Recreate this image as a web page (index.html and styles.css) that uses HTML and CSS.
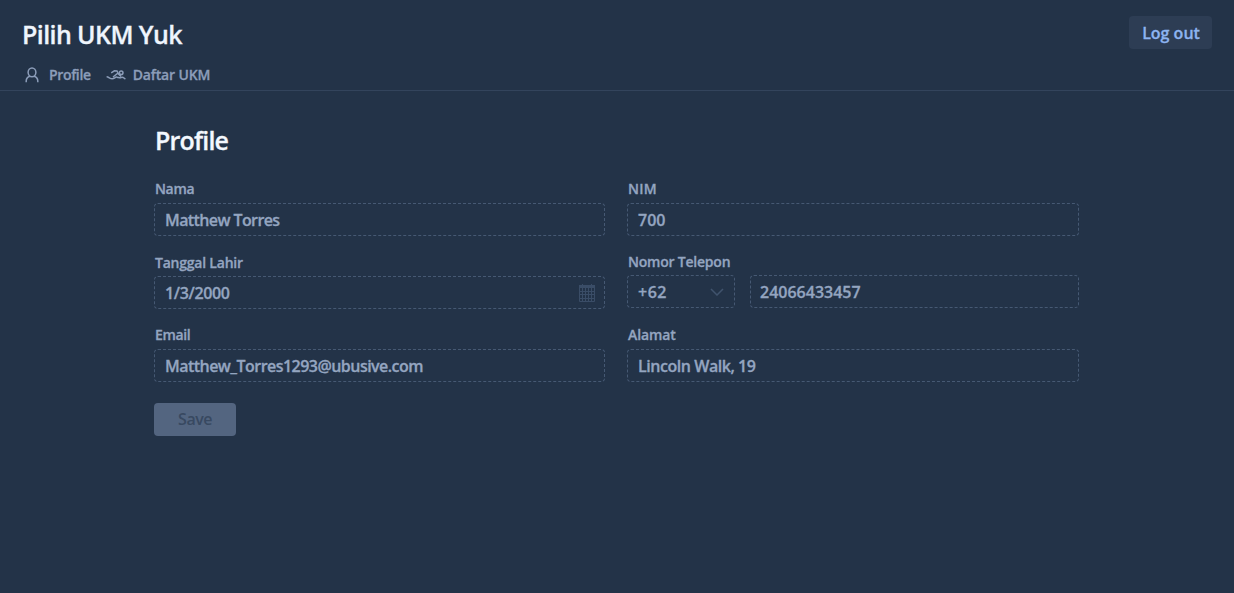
FILE: index.html
```html
<!DOCTYPE html>
<html lang="id">
<head>
<meta charset="utf-8">
<title>Pilih UKM Yuk</title>
<link rel="stylesheet" href="styles.css">
</head>
<body>
<header class="header">
  <div class="topbar">
    <h1 class="brand"><span class="t-brand">Pilih UKM Yuk</span></h1>
    <button class="logout"><span class="t-logout">Log out</span></button>
  </div>
  <nav class="nav">
    <a class="nav-item nav-profile">
      <svg class="icon-user" viewBox="0 0 14 16"><ellipse cx="7" cy="5.3" rx="3.9" ry="4.4"/><path d="M1.2 15.2V14C1.2 11.6 2.8 9.8 5 9.2M12.8 15.2V14C12.8 11.6 11.2 9.8 9 9.2"/></svg>
      <span class="t-profile">Profile</span>
    </a>
    <a class="nav-item">
      <svg class="icon-swim" viewBox="0 0 20 12"><circle cx="15.2" cy="3.8" r="1.8"/><path d="M5.2 3.8 8.4 1.8 11 2 12 4 7 8M12 4.4 15 7.4M.6 7.8C3 7.8 3.6 9.8 6.2 9.8S9 7.6 11.2 8.2 14 9.4 15.4 8.4 17.8 9 19.4 10.2"/></svg>
      <span class="t-daftar">Daftar UKM</span>
    </a>
  </nav>
</header>
<main class="main">
  <h2 class="title"><span class="t-title">Profile</span></h2>
  <form class="form">
    <div class="column">
      <div class="field"><label class="label"><span class="t-nama">Nama</span></label><div class="input"><span class="t-matthew">Matthew Torres</span></div></div>
      <div class="field field-date"><label class="label"><span class="t-tanggal">Tanggal Lahir</span></label><div class="input"><span class="t-date">1/3/2000</span>
        <svg class="icon-calendar" viewBox="0 0 16 18"><path class="cal-head" d="M0 1H3V0H4V1H12V0H13V1H16V4H0Z"/><path d="M.5 4V17.5H15.5V4M.5 7.5H15.5M.5 10.5H15.5M.5 14.5H15.5M3.5 4V17.5M6.5 4V17.5M9.5 4V17.5M12.5 4V17.5"/></svg></div></div>
      <div class="field"><label class="label"><span class="t-email">Email</span></label><div class="input"><span class="t-mail">Matthew_Torres1293@ubusive.com</span></div></div>
    </div>
    <div class="column">
      <div class="field"><label class="label"><span class="t-nim">NIM</span></label><div class="input"><span class="t-700">700</span></div></div>
      <div class="field field-phone"><label class="label"><span class="t-nomor">Nomor Telepon</span></label>
        <div class="phone"><div class="input code"><span class="t-code">+62</span><svg class="icon-chevron" viewBox="0 0 14 8"><path d="M1 1 7 7 13 1"/></svg></div><div class="input number"><span class="t-number">24066433457</span></div></div></div>
      <div class="field"><label class="label"><span class="t-alamat">Alamat</span></label><div class="input"><span class="t-lincoln">Lincoln Walk, 19</span></div></div>
    </div>
  </form>
  <button class="save"><span class="t-save">Save</span></button>
</main>
</body>
</html>
```
FILE: styles.css
```css
* { box-sizing: border-box; }
body {
  margin: 0;
  min-height: 593px;
  background: #233348;
  color: #94a5c0;
  font-family: "Open Sans", "Noto Sans", sans-serif;
  font-weight: 600;
  -webkit-text-stroke: .3px currentColor;
}
h1, h2 { margin: 0; font-weight: 600; }
button { border: 0; font: inherit; border-radius: 4px; padding: 0; }
span { white-space: nowrap; }
svg { fill: none; stroke: currentColor; flex: none; }

.header { height: 91px; padding: 16px 22px 0; border-bottom: 1px solid #33445c; }
.topbar { display: flex; justify-content: space-between; height: 48px; }
.brand { font-size: 25px; line-height: 36px; color: #eff5fd; }
.logout { width: 83px; height: 33px; background: #2d3d54; color: #8db4f0; font-size: 16px; line-height: 35px; padding-left: 1px; }
.nav { display: flex; gap: 15px; font-size: 14px; line-height: 22px; color: #8c9db9; padding-left: 3px; }
.nav-item { display: flex; align-items: center; }
.icon-user { width: 14px; height: 16px; margin: -1px 10px 0 0; stroke-width: 1.5; }
.icon-swim { width: 20px; height: 12px; margin: 0 7px 0 0; stroke-width: 1.5; }

.main { width: 925px; margin-left: 154px; padding-top: 31px; }
.title { font-size: 25px; line-height: 36px; color: #f3f8fe; height: 54px; padding-left: 1px; }
.form { display: grid; grid-template-columns: 451px 452px; gap: 22px; height: 192px; }
.field { height: 73px; padding-top: 3px; }
.label { display: block; height: 24px; padding-left: 1px; font-size: 14px; line-height: 20px; }
.field-date .label { line-height: 22px; }
.field-phone .label { height: 23px; }
.input {
  display: flex; align-items: center; justify-content: space-between;
  height: 33px; padding: 0 9px 0 10px;
  border: 1px dashed #465973; border-radius: 4px;
  font-size: 16px; line-height: 31px;
}
.input span { padding-top: 2px; }
.icon-calendar { width: 16px; height: 18px; color: #3a4d67; stroke-width: 1; }
.cal-head { fill: currentColor; stroke: none; }
.phone { display: flex; gap: 15px; }
.code { width: 108px; padding-right: 10px; }
.number { flex: 1; padding-left: 9px; }
.icon-chevron { width: 14px; height: 8px; color: #40536d; stroke-width: 1.5; }
.save { display: block; width: 82px; height: 33px; margin-top: 35px; background: #536580; color: #384961; font-size: 16px; line-height: 33px; -webkit-text-stroke: 0; }

/* optical tracking per text */
.t-brand { letter-spacing: -.6px; }
.t-title { letter-spacing: -.8px; }
.t-matthew { letter-spacing: -.6px; }
.t-mail { letter-spacing: -.54px; }
.t-lincoln { letter-spacing: -.45px; }
.t-date { letter-spacing: -.35px; }
.t-code { letter-spacing: .5px; }
.t-profile, .t-email { letter-spacing: -.35px; }
.t-nama { letter-spacing: -.35px; }
.t-daftar { letter-spacing: -.15px; }
.t-tanggal, .t-nomor { letter-spacing: -.22px; }
.t-alamat { letter-spacing: -.1px; }
.t-nim { letter-spacing: .2px; }
.t-save { letter-spacing: -.5px; }
```
